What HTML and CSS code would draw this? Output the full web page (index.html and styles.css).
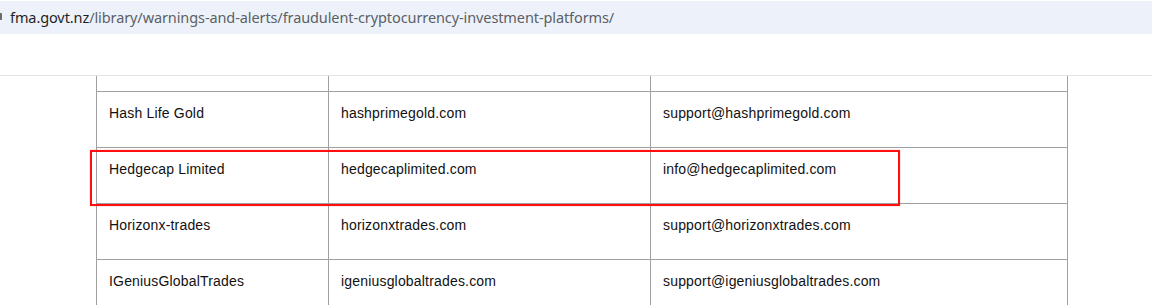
FILE: index.html
```html
<!DOCTYPE html>
<html lang="en">
<head>
<meta charset="utf-8">
<title>Fraudulent cryptocurrency investment platforms</title>
<link rel="stylesheet" href="styles.css">
</head>
<body>
<header class="addressbar">
  <span class="site-icon"></span>
  <span class="url"><span class="host">fma.govt.nz</span>/library/warnings-and-alerts/fraudulent-cryptocurrency-investment-platforms/</span>
</header>
<div class="toolbar-gap"></div>
<main class="content">
  <div class="table-wrap">
    <table class="platforms">
      <colgroup>
        <col class="c1"><col class="c2"><col class="c3">
      </colgroup>
      <tbody>
        <tr class="partial"><td></td><td></td><td></td></tr>
        <tr><td>Hash Life Gold</td><td>hashprimegold.com</td><td>support@hashprimegold.com</td></tr>
        <tr><td>Hedgecap Limited</td><td>hedgecaplimited.com</td><td>info@hedgecaplimited.com</td></tr>
        <tr><td>Horizonx-trades</td><td>horizonxtrades.com</td><td>support@horizonxtrades.com</td></tr>
        <tr><td>IGeniusGlobalTrades</td><td>igeniusglobaltrades.com</td><td>support@igeniusglobaltrades.com</td></tr>
      </tbody>
    </table>
    <div class="highlight"></div>
  </div>
</main>
</body>
</html>
```

FILE: styles.css
```css
html, body {
  margin: 0;
  padding: 0;
  background: #ffffff;
  overflow: hidden;
}

body {
  padding-top: 1px;
}

.addressbar {
  height: 33px;
  background: #edf2fa;
  display: flex;
  align-items: center;
  font-family: "Noto Sans", "Open Sans", sans-serif;
  font-size: 14.5px;
  color: #5b5f66;
  box-sizing: border-box;
  padding-bottom: 2px;
}

.site-icon {
  width: 2px;
  height: 7px;
  background: #6a6a6a;
  margin-right: 8px;
  border-radius: 0 1px 1px 0;
}

.url {
  white-space: nowrap;
  letter-spacing: -0.1px;
}

.host {
  color: #1f1f1f;
}

.toolbar-gap {
  height: 41px;
  border-bottom: 1px solid #e3e3e3;
}

.content {
  padding-left: 96px;
}

.table-wrap {
  position: relative;
  width: 972px;
}

.platforms {
  border-collapse: collapse;
  table-layout: fixed;
  width: 972px;
  font-family: "Liberation Sans", Arial, sans-serif;
  font-size: 14px;
  line-height: 21px;
  letter-spacing: 0.18px;
  color: #111111;
}

.c1 { width: 232px; }
.c2 { width: 322px; }
.c3 { width: 417px; }

.platforms td {
  border: 1px solid #a0a0a0;
  padding: 11px 12px 23px;
  vertical-align: top;
  height: 21px;
}

.platforms tr.partial td {
  border-top: none;
  padding: 0;
  height: 15px;
}

.highlight {
  position: absolute;
  left: -6px;
  top: 74px;
  width: 806px;
  height: 52px;
  border: 2px solid #ff1010;
  box-shadow: 0 0 1px rgba(255, 0, 0, 0.5);
  pointer-events: none;
}
```
